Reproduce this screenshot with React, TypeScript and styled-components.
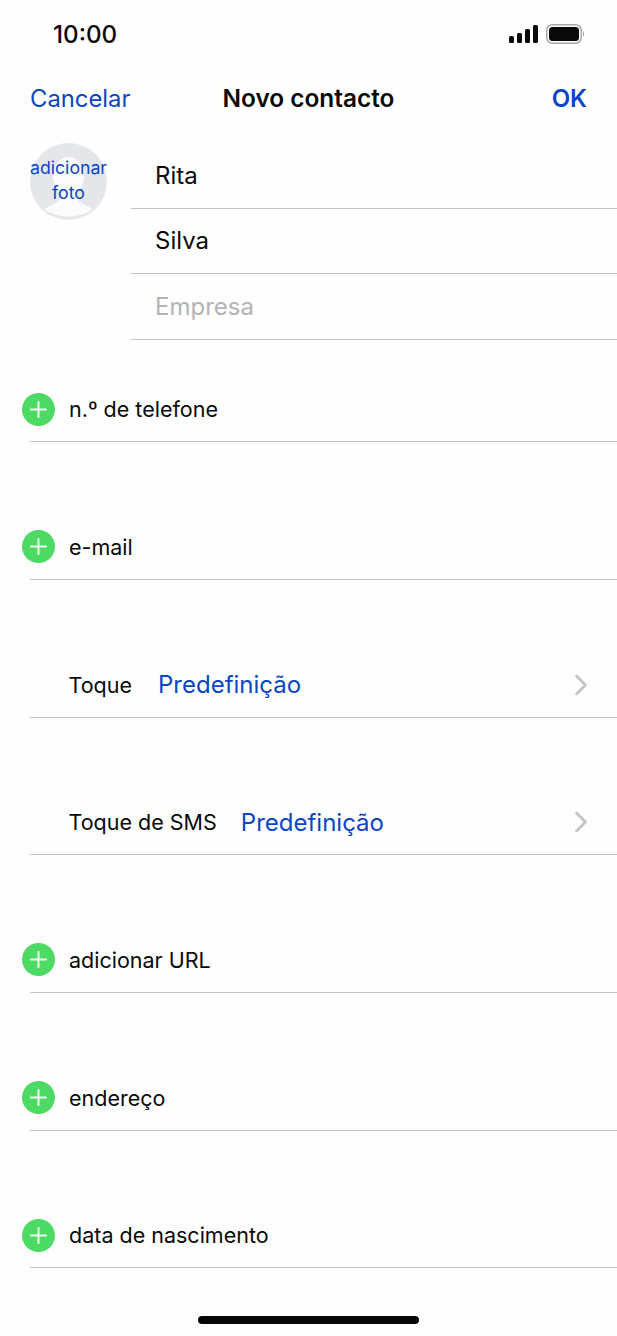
import React from 'react';
import styled, { createGlobalStyle } from 'styled-components';
import { ChevronRight } from 'lucide-react';

const GlobalStyle = createGlobalStyle`
  html, body {
    margin: 0;
    padding: 0;
    background: #fefefe;
  }
  body {
    font-family: Inter, "Liberation Sans", sans-serif;
    color: #0a0a0a;
  }
`;

const Screen = styled.div`
  width: 617px;
  height: 1336px;
  overflow: hidden;
  display: flex;
  flex-direction: column;
  background: #fefefe;
`;

const StatusBar = styled.div`
  height: 34px;
  padding: 17px 32px 0 53px;
  display: flex;
  align-items: center;
  justify-content: space-between;
`;

const Clock = styled.span`
  font-size: 24.2px;
  font-weight: 500;
`;

const StatusIcons = styled.div`
  display: flex;
  align-items: center;
  gap: 8px;
`;

const NavBar = styled.div`
  height: 60px;
  margin-top: 17px;
  padding: 0 30px;
  display: grid;
  grid-template-columns: 1fr auto 1fr;
  align-items: center;
`;

const NavAction = styled.span<{ $bold?: boolean }>`
  font-size: ${p => (p.$bold ? 24 : 23.8)}px;
  font-weight: ${p => (p.$bold ? 600 : 400)};
  color: #0a46c4;
  justify-self: ${p => (p.$bold ? 'end' : 'start')};
`;

const NavTitle = styled.span`
  font-size: 24.4px;
  font-weight: 600;
`;

const NameSection = styled.div`
  display: flex;
  padding-left: 30px;
`;

const AvatarBox = styled.div`
  position: relative;
  width: 77px;
  height: 77px;
  margin-top: 15px;
  margin-right: 24px;
  flex-shrink: 0;
`;

const AvatarLabel = styled.div`
  position: absolute;
  inset: 12px -6px 0;
  text-align: center;
  font-size: 17.7px;
  line-height: 25px;
  color: #0a46c4;
`;

const NameFields = styled.div`
  flex: 1;
  padding-top: 15.2px;
`;

const NameField = styled.div<{ $placeholder?: boolean }>`
  height: 65.5px;
  box-sizing: border-box;
  padding-left: 24px;
  display: flex;
  align-items: center;
  font-size: 24px;
  border-bottom: 1px solid #c4c4c6;
  color: ${p => (p.$placeholder ? '#b3b3b6' : '#0a0a0a')};
`;

const Rows = styled.div`
  padding-left: 30px;
  margin-top: -35.2px;
`;

const Row = styled.div`
  height: 137.7px;
  box-sizing: border-box;
  border-bottom: 1px solid #c4c4c6;
  display: flex;
  align-items: flex-end;
`;

const RowInner = styled.div`
  height: 64px;
  width: 100%;
  display: flex;
  align-items: center;
  font-size: 21.5px;
  padding-right: 18px;
  box-sizing: border-box;
`;

const AddButton = styled.span`
  width: 33px;
  height: 33px;
  margin-left: -8px;
  margin-right: 14px;
  border-radius: 50%;
  background: #4cd964;
  display: flex;
  align-items: center;
  justify-content: center;
  flex-shrink: 0;
`;

const ToneLabel = styled.span`
  margin-left: 38.5px;
`;

const ToneValue = styled.span<{ $gap: number }>`
  margin-left: ${p => p.$gap}px;
  font-size: 24px;
  color: #0a46c4;
  flex: 1;
`;

const HomeIndicator = styled.div`
  position: absolute;
  left: 198px;
  top: 1316px;
  width: 221px;
  height: 8px;
  border-radius: 4px;
  background: #050505;
`;

const SignalIcon = () => (
  <svg width="29" height="18" viewBox="0 0 29 18" fill="#0a0a0a">
    <rect x="0" y="11" width="5" height="7" rx="1.5" />
    <rect x="8" y="8" width="5" height="10" rx="1.5" />
    <rect x="16" y="4" width="5" height="14" rx="1.5" />
    <rect x="24" y="0" width="5" height="18" rx="1.5" />
  </svg>
);

const BatteryIcon = () => (
  <svg width="39" height="20" viewBox="0 0 39 20">
    <rect x="0.75" y="0.75" width="34.5" height="18.5" rx="5.5" fill="none" stroke="#a8a8a8" strokeWidth="1.5" />
    <rect x="3" y="3" width="30" height="14" rx="3.5" fill="#0a0a0a" />
    <path d="M37 7 C38.4 7.6 38.4 12.4 37 13 Z" fill="#a8a8a8" />
  </svg>
);

const AvatarIcon = () => (
  <svg width="77" height="77" viewBox="0 0 77 77">
    <circle cx="38.5" cy="38.5" r="38.5" fill="#e4e6e9" />
    <ellipse cx="38.5" cy="33" rx="15.5" ry="19" fill="#fbfbfb" />
    <path d="M14 66 C23 61 31 60 32 49 L45 49 C46 60 54 61 63 66 C56 71 47 73.5 38.5 73.5 C30 73.5 21 71 14 66 Z" fill="#fbfbfb" />
  </svg>
);

const PlusIcon = () => (
  <svg width="17" height="17" viewBox="0 0 17 17" stroke="#f4fff6" strokeWidth="2" strokeLinecap="round">
    <path d="M8.5 1v15M1 8.5h15" />
  </svg>
);

const addRow = (label: string) => (
  <Row key={label}>
    <RowInner>
      <AddButton>
        <PlusIcon />
      </AddButton>
      {label}
    </RowInner>
  </Row>
);

const toneRow = (label: string, gap: number) => (
  <Row key={label}>
    <RowInner>
      <ToneLabel>{label}</ToneLabel>
      <ToneValue $gap={gap}>Predefinição</ToneValue>
      <ChevronRight size={36} color="#c4c4c7" strokeWidth={1.8} />
    </RowInner>
  </Row>
);

export default function App() {
  return (
    <Screen>
      <GlobalStyle />
      <StatusBar>
        <Clock>10:00</Clock>
        <StatusIcons>
          <SignalIcon />
          <BatteryIcon />
        </StatusIcons>
      </StatusBar>
      <NavBar>
        <NavAction>Cancelar</NavAction>
        <NavTitle>Novo contacto</NavTitle>
        <NavAction $bold>OK</NavAction>
      </NavBar>
      <NameSection>
        <AvatarBox>
          <AvatarIcon />
          <AvatarLabel>
            adicionar
            <br />
            foto
          </AvatarLabel>
        </AvatarBox>
        <NameFields>
          <NameField>Rita</NameField>
          <NameField>Silva</NameField>
          <NameField $placeholder>Empresa</NameField>
        </NameFields>
      </NameSection>
      <Rows>
        {addRow('n.º de telefone')}
        {addRow('e-mail')}
        {toneRow('Toque', 26)}
        {toneRow('Toque de SMS', 24)}
        {addRow('adicionar URL')}
        {addRow('endereço')}
        {addRow('data de nascimento')}
      </Rows>
      <HomeIndicator />
    </Screen>
  );
}
